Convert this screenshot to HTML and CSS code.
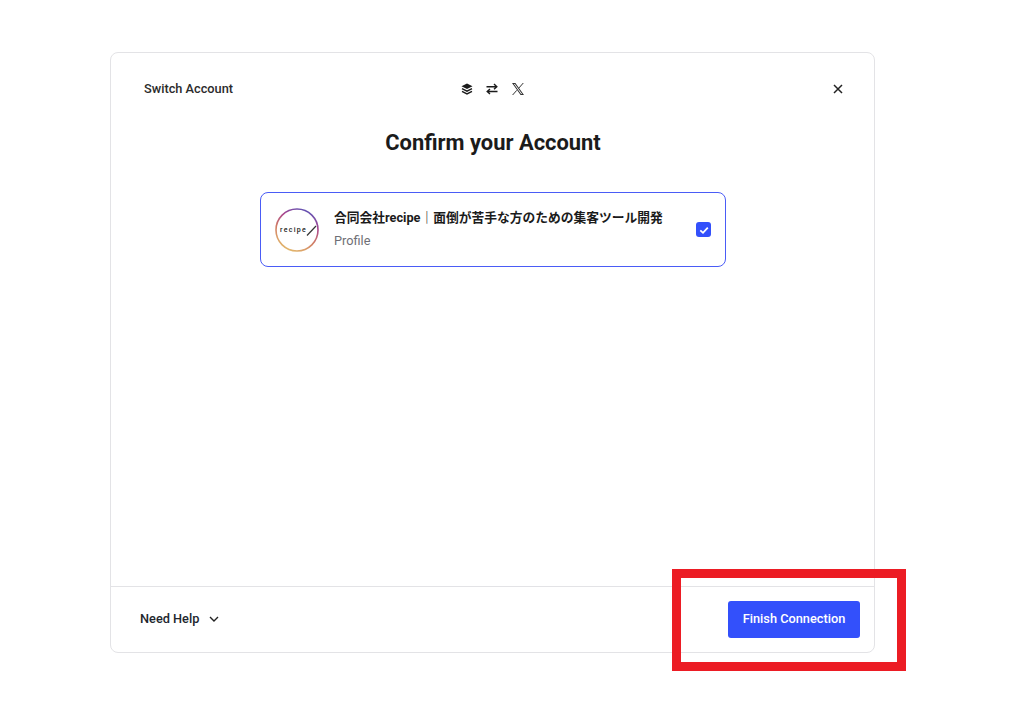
FILE: index.html
```html
<!DOCTYPE html>
<html lang="ja">
<head>
<meta charset="utf-8">
<title>Confirm your Account</title>
<link rel="stylesheet" href="styles.css">
</head>
<body>
<main class="modal">
  <div class="modal-body">
    <header class="top">
      <span class="switch">Switch Account</span>
      <div class="flow">
        <svg class="flow-icon" viewBox="0 0 12 12" width="12" height="12"><path d="M6 .5 11.500 3.200 6 6 .5 3.200Z" fill="#1b1b1b"/><path d="M1 5.600 6 8.100l5-2.500" fill="none" stroke="#1b1b1b" stroke-width="1.400"/><path d="M1 8.400 6 10.900l5-2.500" fill="none" stroke="#1b1b1b" stroke-width="1.400"/></svg>
        <svg class="flow-icon" viewBox="0 0 12 12" width="12" height="12"><path d="M.5 3.700h10M8 1l2.800 2.700L8 6.200M11.500 8.500h-10M4 5.900 1.200 8.500 4 11" fill="none" stroke="#1b1b1b" stroke-width="1.400"/></svg>
        <svg class="flow-icon x" viewBox="0 0 14 14" width="14" height="14"><path d="M1 1h3.400l8.600 12H9.600ZM2.900 2l7.200 10h1L3.900 2Z" fill="#333" fill-rule="evenodd"/><path d="M12.300 1 7.800 6.100M5.800 8.300 1.600 13" fill="none" stroke="#333" stroke-width="1"/></svg>
      </div>
      <svg class="close" viewBox="0 0 10 10" width="10" height="10"><path d="M1 1l8 8M9 1 1 9" fill="none" stroke="#222" stroke-width="1.500"/></svg>
    </header>
    <h1 class="title">Confirm your Account</h1>
    <section class="account">
      <svg class="avatar" viewBox="0 0 44 44" width="44" height="44">
        <defs><linearGradient id="ring" x1=".75" y1="0" x2=".3" y2="1"><stop offset="0" stop-color="#5a55b8"/><stop offset=".3" stop-color="#a8458f"/><stop offset=".6" stop-color="#cf7a66"/><stop offset="1" stop-color="#e3b96c"/></linearGradient></defs>
        <circle cx="22" cy="22" r="21" fill="#fff" stroke="url(#ring)" stroke-width="1.600"/>
        <text class="avatar-text" x="5" y="24">recipe</text>
        <path d="M32 27.500 41 18" stroke="#333" stroke-width="1.200" fill="none"/>
      </svg>
      <div class="info">
        <div class="name">合同会社recipe｜面倒が苦手な方のための集客ツール開発</div>
        <div class="kind">Profile</div>
      </div>
      <span class="check"><svg viewBox="0 0 14 14" width="14" height="14"><path d="M3.300 7.300 6 9.800l4.800-5.200" fill="none" stroke="#fff" stroke-width="1.800"/></svg></span>
    </section>
  </div>
  <footer class="bottom">
    <div class="help"><span>Need Help</span><svg viewBox="0 0 10 6" width="10" height="6"><path d="M1 1l4 4 4-4" fill="none" stroke="#222" stroke-width="1.400"/></svg></div>
    <button class="finish">Finish Connection</button>
  </footer>
</main>
<div class="highlight"></div>
</body>
</html>
```
FILE: styles.css
```css
html, body { margin: 0; padding: 0; background: #fff; }
body { height: 704px; overflow: hidden; font-family: Roboto, "Noto Sans CJK JP", sans-serif; color: #1b1b1b; padding: 52px 0 0 110px; box-sizing: border-box; position: relative; }
.modal { width: 765px; height: 601px; box-sizing: border-box; border: 1px solid #e3e3e6; border-radius: 8px; display: flex; flex-direction: column; }
.modal-body { flex: 1; display: flex; flex-direction: column; align-items: center; padding: 28px 31px 0 32px; }
.top { align-self: stretch; display: grid; grid-template-columns: 1fr auto 1fr; align-items: center; height: 16px; }
.switch { font-size: 12.750px; line-height: 16px; padding-left: 1px; font-weight: 500; color: #2b2b2b; }
.flow { display: flex; align-items: center; gap: 13px; }
.flow-icon { display: block; }
.close { justify-self: end; }
.title { margin: 33px 0 0; font-size: 21.900px; line-height: 26px; font-weight: 700; color: #1b1b1b; }
.account { width: 466px; height: 75px; box-sizing: border-box; margin-top: 36px; border: 1px solid #4a5cf6; border-radius: 8px; display: flex; align-items: center; padding: 0 14px; }
.avatar { flex: none; }
.avatar-text { font-family: Roboto, sans-serif; font-size: 7px; font-weight: 500; letter-spacing: 1.300px; fill: #222; }
.info { flex: 1; margin-left: 15px; padding-bottom: 2px; display: flex; flex-direction: column; gap: 6px; }
.name { font-size: 12.750px; line-height: 17px; font-weight: 700; color: #1b1b1b; white-space: nowrap; }
.kind { font-size: 12.750px; line-height: 17px; color: #6f6f76; }
.check { width: 15px; height: 15px; border-radius: 3px; background: #3350fb; display: flex; align-items: center; justify-content: center; }
.bottom { height: 66px; box-sizing: border-box; border-top: 1px solid #e3e3e6; display: flex; align-items: center; justify-content: space-between; padding: 0 14px 0 29px; }
.help { display: flex; align-items: center; gap: 10px; font-size: 12.750px; font-weight: 500; color: #22262e; padding-bottom: 2px; }
.finish { width: 132px; height: 37px; padding: 0 0 2px; border: 0; border-radius: 3px; background: #3350fb; color: #fff; font: 500 12.750px Roboto, sans-serif; }
.highlight { position: absolute; left: 672px; top: 569px; width: 234px; height: 102px; box-sizing: border-box; border: 9px solid #ec1c24; }
```
